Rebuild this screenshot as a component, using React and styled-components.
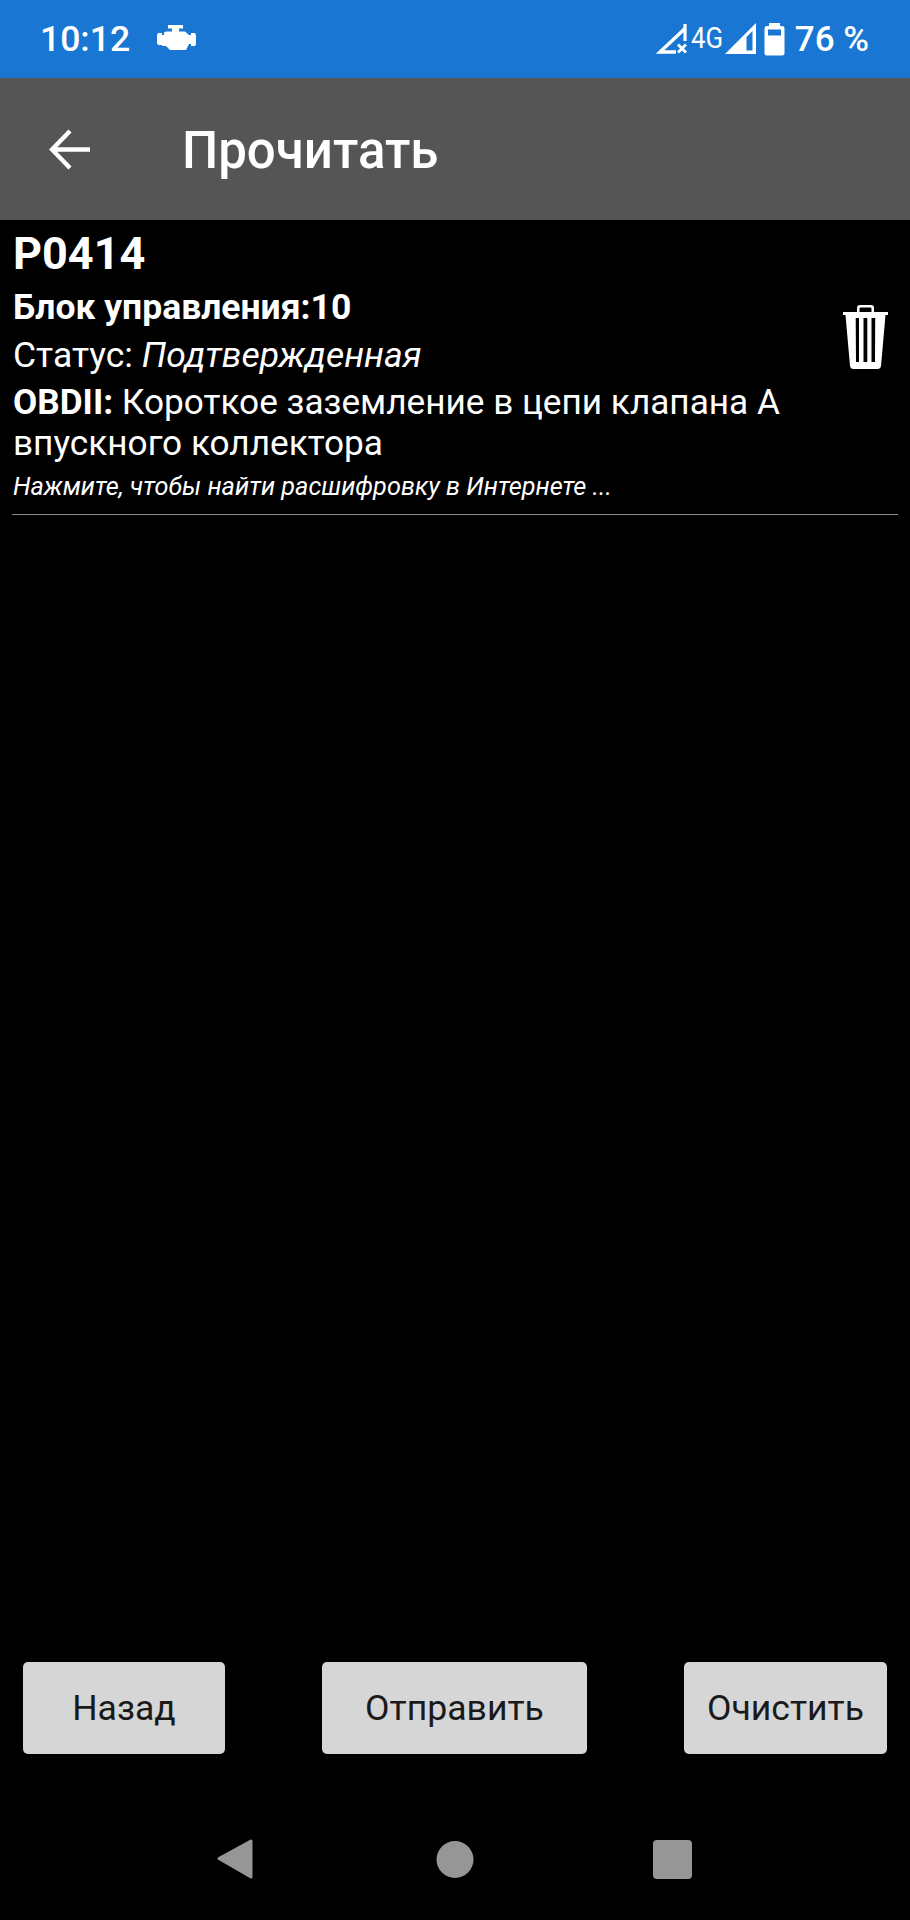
import React from 'react';
import styled, { createGlobalStyle } from 'styled-components';

const Global = createGlobalStyle`
  html, body { margin: 0; padding: 0; background: #000; }
  body { font-family: Roboto, "Noto Sans", sans-serif; }
`;

const Screen = styled.div`
  width: 910px;
  height: 1920px;
  display: flex;
  flex-direction: column;
  background: #000;
  color: #fff;
  overflow: hidden;
`;

const StatusBar = styled.div`
  height: 78px;
  flex: none;
  background: #1976d2;
  display: flex;
  align-items: center;
  padding: 0 41px 0 40px;
  box-sizing: border-box;
`;

const Clock = styled.span`
  font-size: 35.5px;
  font-weight: 500;
  line-height: 78px;
`;

const EngineIcon = styled.svg`
  width: 39px;
  height: 26px;
  margin: 0 0 2px 27px;
`;

const StatusRight = styled.div`
  margin-left: auto;
  display: flex;
  align-items: center;
`;

const SignalIcon = styled.svg`
  width: 33px;
  height: 32px;
  flex: none;
  display: block;
`;

const Network = styled.span`
  display: inline-block;
  font-size: 30px;
  line-height: 32px;
  width: 33px;
  transform: scaleX(0.86);
  transform-origin: left center;
  margin: -2px 0 0 3px;
`;

const BatteryIcon = styled.svg`
  width: 21px;
  height: 33px;
  margin: 0 10px 0 7px;
  flex: none;
`;

const Percent = styled.span`
  font-size: 35px;
  font-weight: 500;
  line-height: 78px;
  padding-top: 1px;
`;

const Toolbar = styled.div`
  height: 142px;
  flex: none;
  background: #555;
  display: flex;
  align-items: center;
  padding-left: 49px;
  box-sizing: border-box;
`;

const BackIcon = styled.svg`
  width: 41px;
  height: 41px;
  flex: none;
`;

const Title = styled.h1`
  margin: 4px 0 0 92px;
  font-size: 51px;
  font-weight: 500;
  line-height: 60px;
`;

const Content = styled.div`
  flex: 1;
  padding: 0 12px;
`;

const Item = styled.div`
  display: flex;
  height: 295px;
  box-sizing: border-box;
  border-bottom: 1px solid #8a8a8a;
`;

const ItemText = styled.div`
  flex: 1;
  padding: 6px 0 0 1px;
`;

const Code = styled.div`
  font-size: 45px;
  font-weight: 700;
  line-height: 56px;
`;

const Line = styled.div`
  font-size: ${p => p.$size || 35.5}px;
  line-height: 41px;
  margin-top: ${p => p.$gap || 0}px;
  font-weight: ${p => (p.$bold ? 700 : 400)};
  width: 780px;
`;

const Hint = styled.div`
  font-size: 25.3px;
  font-style: italic;
  line-height: 30px;
  margin-top: 8px;
`;

const TrashIcon = styled.svg`
  width: 46px;
  height: 64px;
  flex: none;
  margin: 85px 9px 0 0;
`;

const ButtonRow = styled.div`
  display: flex;
  justify-content: space-between;
  padding: 0 23px;
  height: 92px;
  flex: none;
`;

const Button = styled.button`
  width: ${p => p.$width}px;
  height: 92px;
  border: 0;
  border-radius: 5px;
  background: #d6d6d6;
  color: #1a1a1a;
  font-family: Roboto, sans-serif;
  font-size: 35.6px;
  padding: 0;
`;

const NavBar = styled.div`
  height: 166px;
  flex: none;
  display: flex;
  justify-content: center;
  align-items: flex-start;
  padding-top: 84px;
  box-sizing: border-box;
`;

const NavSlot = styled.div`
  width: 218px;
  display: flex;
  justify-content: center;
`;

const NavIcon = styled.svg`
  width: 40px;
  height: 42px;
  display: block;
`;

const Signal = ({ muted }) => (
  <SignalIcon viewBox="0 0 33 32">
    {muted ? (
      <>
        <path fill="none" stroke="#fff" strokeWidth="3.4" d="M30 5.5 L5 29 H21" />
        <path fill="none" stroke="#fff" strokeWidth="3.2" d="M30 1 V18" />
        <path fill="none" stroke="#fff" strokeWidth="2.8" d="M23 21.5 L31 29.5 M31 21.5 L23 29.5" />
      </>
    ) : (
      <path
        fill="#fff"
        fillRule="evenodd"
        d="M32 0 V31 H1 Z M28.5 8 L22.5 14 V27.5 H28.5 Z"
      />
    )}
  </SignalIcon>
);

export default function App() {
  return (
    <Screen>
      <Global />
      <StatusBar>
        <Clock>10:12</Clock>
        <EngineIcon viewBox="0 0 39 26">
          <path
            fill="#fff"
            d="M11 0 H26 V3.5 H22 V6.5 H28 L32 10 H34 V8 H38 L39 10 V19 L38 21 H34 V19 H32 L29 25 H13 L9 21 H5 V20 H1 L0 18 V10 L1 8 H5 V10 H7 V7.5 L9 6.5 H15 V3.5 H11 Z"
          />
        </EngineIcon>
        <StatusRight>
          <Signal muted />
          <Network>4G</Network>
          <Signal />
          <BatteryIcon viewBox="0 0 21 33">
            <path
              fill="#fff"
              fillRule="evenodd"
              d="M5 0 H16 V3 H18 Q20.5 3 20.5 5.5 V30 Q20.5 32.5 18 32.5 H3 Q0.5 32.5 0.5 30 V5.5 Q0.5 3 3 3 H5 Z M4 6.5 V12.5 H17 V6.5 Z"
            />
          </BatteryIcon>
          <Percent>76 %</Percent>
        </StatusRight>
      </StatusBar>

      <Toolbar>
        <BackIcon viewBox="0 0 41 41" fill="none" stroke="#fff" strokeWidth="4.4">
          <path d="M41 20.5 H3.5 M21 2 L3 20.5 L21 39" />
        </BackIcon>
        <Title>Прочитать</Title>
      </Toolbar>

      <Content>
        <Item>
          <ItemText>
            <Code>P0414</Code>
            <Line $bold $gap={5}>Блок управления:10</Line>
            <Line $gap={7}>Статус: <i>Подтвержденная</i></Line>
            <Line $gap={6} $size={35.2}><b>OBDII:</b> Короткое заземление в цепи клапана А впускного коллектора</Line>
            <Hint>Нажмите, чтобы найти расшифровку в Интернете ...</Hint>
          </ItemText>
          <TrashIcon viewBox="0 0 46 64">
            <path
              fill="#fff"
              fillRule="evenodd"
              d="M0 7 H14 V3 Q14 0 17 0 H28 Q31 0 31 3 V7 H45 V10 H42.5 L38 61 Q37.5 64 34.5 64 H10.5 Q7.5 64 7 61 L2.5 10 H0 Z M16.5 7 H28.5 V3.5 Q28.5 2.5 27.5 2.5 H17.5 Q16.5 2.5 16.5 3.5 Z M12.7 13 L13 57 H16 V13 Z M20.5 13 V57 H24.3 V13 Z M28.5 13 V57 H32 L32.2 13 Z"
            />
          </TrashIcon>
        </Item>
      </Content>

      <ButtonRow>
        <Button $width={202}>Назад</Button>
        <Button $width={265}>Отправить</Button>
        <Button $width={203}>Очистить</Button>
      </ButtonRow>

      <NavBar>
        <NavSlot>
          <NavIcon viewBox="0 0 40 42">
            <path fill="#969696" stroke="#969696" strokeWidth="3" strokeLinejoin="round" d="M34 3 V39 L2 20.5 Z" />
          </NavIcon>
        </NavSlot>
        <NavSlot>
          <NavIcon viewBox="0 0 40 42">
            <circle cx="20" cy="21.5" r="18.5" fill="#969696" />
          </NavIcon>
        </NavSlot>
        <NavSlot>
          <NavIcon viewBox="0 0 40 42">
            <rect x="0" y="2" width="39" height="39" rx="4" fill="#969696" />
          </NavIcon>
        </NavSlot>
      </NavBar>
    </Screen>
  );
}
